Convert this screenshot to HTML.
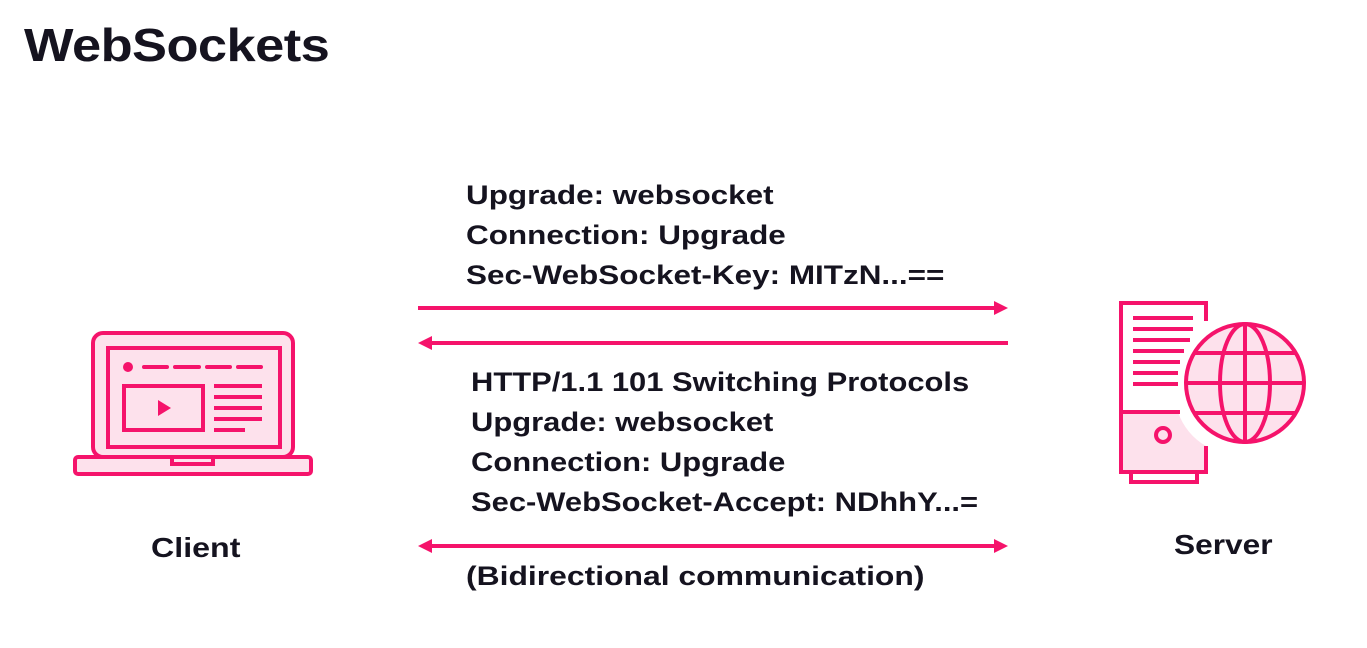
<html><head><style>
body{margin:0;width:1367px;height:648px;background:#fff;font-family:"Liberation Sans",sans-serif;color:#15131f;position:relative;overflow:hidden}
.t{position:absolute;font-weight:bold;white-space:nowrap;transform-origin:0 0}
.m{font-size:27px;line-height:40px;transform:scaleX(1.165)}
</style></head><body>
<div class="t" style="left:24px;top:18px;font-size:46px;letter-spacing:-0.5px;transform:scaleX(1.14)">WebSockets</div>
<div class="t m" style="left:466px;top:175px">Upgrade: websocket<br>Connection: Upgrade<br>Sec-WebSocket-Key: MITzN...==</div>
<div class="t m" style="left:471px;top:362px;transform:scaleX(1.145)">HTTP/1.1 101 Switching Protocols<br>Upgrade: websocket<br>Connection: Upgrade<br>Sec-WebSocket-Accept: NDhhY...=</div>
<div class="t m" style="left:466px;top:556px;transform:scaleX(1.18)">(Bidirectional communication)</div>
<div class="t" style="left:151px;top:532px;font-size:28px;transform:scaleX(1.15)">Client</div>
<div class="t" style="left:1174px;top:529px;font-size:28px;transform:scaleX(1.13)">Server</div>
<svg width="1367" height="648" style="position:absolute;left:0;top:0" fill="none" stroke="#f5136b" stroke-width="4">
<line x1="418" y1="308" x2="1000" y2="308"/><path d="M994 301 L1008 308 L994 315Z" fill="#f5136b" stroke="none"/>
<line x1="426" y1="343" x2="1008" y2="343"/><path d="M432 336 L418 343 L432 350Z" fill="#f5136b" stroke="none"/>
<line x1="426" y1="546" x2="1000" y2="546"/><path d="M994 539 L1008 546 L994 553Z" fill="#f5136b" stroke="none"/><path d="M432 539 L418 546 L432 553Z" fill="#f5136b" stroke="none"/>
<rect x="93" y="333" width="200" height="124" rx="10" fill="#fde1ec"/>
<rect x="108" y="348" width="172" height="99"/>
<rect x="75" y="457" width="236" height="17" rx="3" fill="#fde1ec"/>
<path d="M172 457 V464 H213 V457"/>
<circle cx="128" cy="367" r="5" fill="#f5136b" stroke="none"/>
<path d="M144 367H167M175 367H199M207 367H230M238 367H261" stroke-linecap="round"/>
<rect x="124" y="386" width="79" height="44"/>
<path d="M158 400 L171 408 L158 416Z" fill="#f5136b" stroke="none"/>
<path d="M214 386H262M214 397H262M214 408H262M214 419H262M214 430H245"/>
<path d="M1206 321 V303 H1121 V472 H1206 V446"/>
<path d="M1121 412 V472 H1206 V446 A62 62 0 0 1 1178 412Z" fill="#fde1ec" stroke="none"/>
<path d="M1121 412 H1180 M1121 412 V472 H1206 V446"/>
<rect x="1131" y="472" width="66" height="10"/>
<circle cx="1163" cy="435" r="7"/>
<path d="M1133 318H1193M1133 329H1193M1133 340H1190M1133 351H1184M1133 362H1180M1133 373H1178M1133 384H1178"/>
<circle cx="1245" cy="383" r="59" fill="#fde1ec"/>
<ellipse cx="1245" cy="383" rx="25" ry="59"/>
<path d="M1245 324V442M1186 383H1304M1195 353H1295M1195 413H1295"/>
</svg>
</body></html>
